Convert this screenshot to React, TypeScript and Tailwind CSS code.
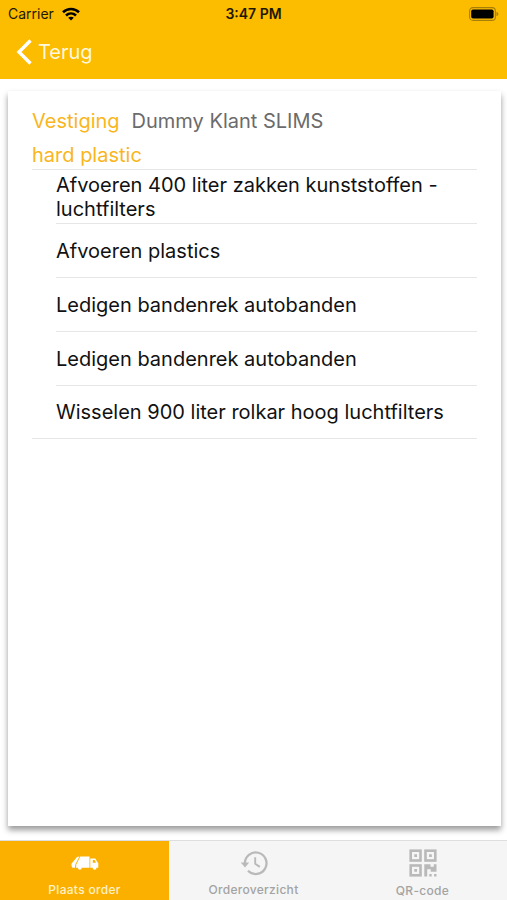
import type { ReactNode } from "react";

const items = [
  "Afvoeren 400 liter zakken kunststoffen - luchtfilters",
  "Afvoeren plastics",
  "Ledigen bandenrek autobanden",
  "Ledigen bandenrek autobanden",
  "Wisselen 900 liter rolkar hoog luchtfilters",
];

function WifiIcon() {
  return (
    <svg width="18" height="14" viewBox="0 0 18 14" fill="none" stroke="currentColor" strokeWidth="2.6" aria-hidden="true">
      <path d="M1 5.2C5.6.9 12.4.9 17 5.2" />
      <path d="M4 8.5c2.9-2.7 7.1-2.7 10 0" />
      <path d="M9 13.6 6.2 10.8c1.6-1.5 4-1.5 5.6 0Z" fill="currentColor" stroke="none" />
    </svg>
  );
}

function BatteryIcon() {
  return (
    <svg width="30" height="14" viewBox="0 0 30 14" aria-hidden="true">
      <rect x=".6" y=".6" width="25.8" height="12.8" rx="3.4" fill="none" stroke="#a67f08" strokeWidth="1.1" />
      <rect x="2.2" y="2.4" width="22.4" height="9.2" rx="1.8" fill="#000" />
      <path d="M27.5 4.8c2.4.8 2.4 3.6 0 4.4Z" fill="#a67f08" />
    </svg>
  );
}

function TruckIcon() {
  return (
    <svg width="28" height="14" viewBox="0 0 28 14" aria-hidden="true">
      <path d="M6 .9 8.4.5 4.4 8.2l-.4 3.5H1.4L.4 9.6.6 7.4Z" fill="#fff" />
      <path d="M9.3.5h9.2v11.2H5L5.3 8.5Z" fill="#fff" />
      <path d="M19.3 2.4h5l2.2 3.8.8.9v4.6h-8Z" fill="#fff" />
      <path d="M21.8 4h1.9l1.3 2.7h-3.2Z" fill="#fbb000" />
      <circle cx="8.8" cy="11.8" r="1.9" fill="#fff" />
      <circle cx="23.6" cy="11.8" r="1.9" fill="#fff" />
    </svg>
  );
}

function HistoryIcon() {
  return (
    <svg width="28" height="26" viewBox="0 0 28 26" fill="none" stroke="#b9b9b9" strokeWidth="2.3" aria-hidden="true">
      <path d="M4.9 13.5A10.8 10.8 0 1 1 8 20.8" />
      <path d="M.8 12.4h8.4l-4.2 5Z" fill="#b9b9b9" stroke="none" />
      <path d="M15.2 7.2v6.6l4.6 3.1" strokeWidth="1.9" />
    </svg>
  );
}

function QrIcon() {
  return (
    <svg width="28" height="28" viewBox="0 0 28 28" fill="#b9b9b9" aria-hidden="true">
      <g fill="none" stroke="#b9b9b9" strokeWidth="2.6">
        <rect x="1.7" y="1.7" width="9.8" height="9.8" />
        <rect x="16.5" y="1.7" width="9.8" height="9.8" />
        <rect x="1.7" y="16.5" width="9.8" height="9.8" />
      </g>
      <path d="M5.3 5.3H8V8H5.3ZM20.1 5.3h2.7V8h-2.7ZM5.3 20.1H8v2.7H5.3Z" />
      <path d="M15.3 15.3h6.2v2.5h3.3v-2.5h2.7v7.5h-5.8v-2.5h-3.5v7.2h-2.9ZM20.3 25h2.4v2.5h-2.4ZM25.1 25h2.4v2.5h-2.4Z" />
    </svg>
  );
}

function Tab({ icon, label, active = false }: { icon: ReactNode; label: string; active?: boolean }) {
  return (
    <button
      type="button"
      aria-current={active ? "page" : undefined}
      className={`flex flex-1 flex-col items-center pt-2 text-xs font-medium ${
        active ? "bg-[#fbb000] text-[#fff0c8]" : "text-[#a3a3a3]"
      }`}
    >
      <span className="flex h-7 items-center">{icon}</span>
      <span className="mt-1 leading-5 tracking-wide">{label}</span>
    </button>
  );
}

export default function App() {
  return (
    <div className="flex min-h-screen flex-col bg-white font-['Inter','Liberation_Sans',sans-serif]">
      <header className="bg-[#fcbc00]">
        <div className="grid h-7 grid-cols-3 items-center pr-2 pl-2 text-sm text-[#1f1800]">
          <div className="flex items-center gap-2">
            <span>Carrier</span>
            <span className="text-black"><WifiIcon /></span>
          </div>
          <span className="text-center font-semibold">3:47 PM</span>
          <span className="flex justify-end"><BatteryIcon /></span>
        </div>
        <nav className="h-[51px] px-4 pt-2">
          <button type="button" className="flex items-center gap-1.5 text-xl leading-8 text-[#fff8df]">
            <svg width="16" height="26" viewBox="0 0 16 26" fill="none" stroke="#fff" strokeWidth="3.4" aria-hidden="true">
              <path d="M14.5 1.5 3 13l11.5 11.5" />
            </svg>
            Terug
          </button>
        </nav>
      </header>

      <main className="mr-1.5 ml-2 mt-3 mb-3.5 flex-1 bg-white px-6 pt-4 shadow-[0_4px_6px_rgba(0,0,0,0.4)]">
        <div className="flex gap-3 text-xl leading-7">
          <span className="text-[#f9b61c]">Vestiging</span>
          <span className="text-[#6b6b6b]">Dummy Klant SLIMS</span>
        </div>
        <h1 className="mt-1.5 text-xl leading-7 text-[#f9b61c]">hard plastic</h1>
        <ul className="border-y border-[#e6e6e6] pl-6 text-xl leading-6 text-[#111]">
          {items.map((item, i) => (
            <li key={i} className="flex min-h-[54px] items-center border-b border-[#e6e6e6] last:min-h-[52px] last:border-b-0">
              {item}
            </li>
          ))}
        </ul>
      </main>

      <footer className="flex h-[60px] border-t border-[#dedede] bg-[#f5f5f5]">
        <Tab icon={<TruckIcon />} label="Plaats order" active />
        <Tab icon={<HistoryIcon />} label="Orderoverzicht" />
        <Tab icon={<QrIcon />} label="QR-code" />
      </footer>
    </div>
  );
}
